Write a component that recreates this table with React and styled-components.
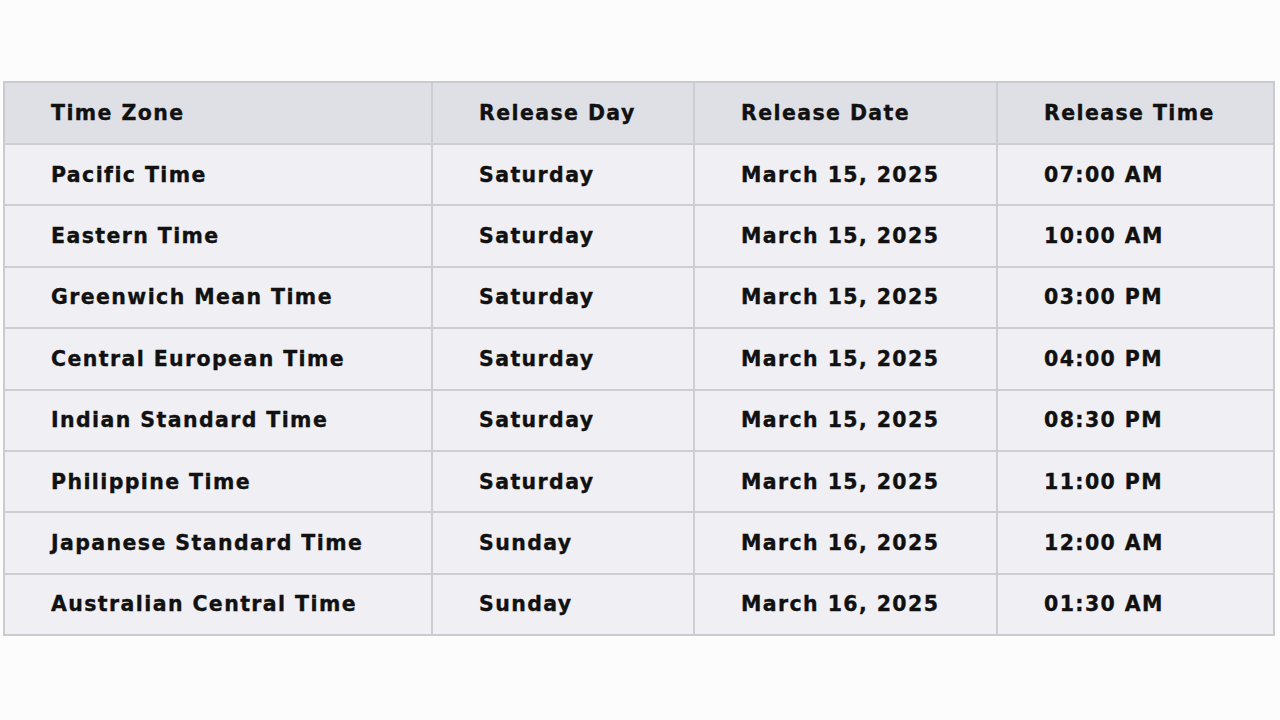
import React from 'react'
import styled, { createGlobalStyle } from 'styled-components'

const columns = ['Time Zone', 'Release Day', 'Release Date', 'Release Time']

const rows = [
  ['Pacific Time', 'Saturday', 'March 15, 2025', '07:00 AM'],
  ['Eastern Time', 'Saturday', 'March 15, 2025', '10:00 AM'],
  ['Greenwich Mean Time', 'Saturday', 'March 15, 2025', '03:00 PM'],
  ['Central European Time', 'Saturday', 'March 15, 2025', '04:00 PM'],
  ['Indian Standard Time', 'Saturday', 'March 15, 2025', '08:30 PM'],
  ['Philippine Time', 'Saturday', 'March 15, 2025', '11:00 PM'],
  ['Japanese Standard Time', 'Sunday', 'March 16, 2025', '12:00 AM'],
  ['Australian Central Time', 'Sunday', 'March 16, 2025', '01:30 AM'],
]

const GlobalStyle = createGlobalStyle`
  body {
    margin: 0;
    background: #fcfcfd;
    font-family: "DejaVu Sans", "Liberation Sans", sans-serif;
  }
`

const Page = styled.div`
  padding: 81px 0 0 3px;
`

const Grid = styled.div`
  display: grid;
  grid-template-columns: 426px 260px 301px 275px;
  grid-auto-rows: 59.4px;
  grid-template-rows: 60px;
  gap: 2px;
  width: max-content;
  border: 2px solid #cacacf;
  background: #cdcdd2;
`

const Cell = styled.div`
  display: flex;
  align-items: center;
  padding-left: 46px;
  background: ${(p) => (p.$head ? '#dfdfe6' : '#f0eff3')};
  color: #111;
  font-size: 20.5px;
  font-weight: 700;
  letter-spacing: 1.4px;
  -webkit-text-stroke: 0.35px #111;
  white-space: nowrap;
`

export default function App() {
  return (
    <>
      <GlobalStyle />
      <Page>
        <Grid>
          {columns.map((c) => (
            <Cell $head key={c}>{c}</Cell>
          ))}
          {rows.map((r) =>
            r.map((c, i) => <Cell key={r[0] + i}>{c}</Cell>)
          )}
        </Grid>
      </Page>
    </>
  )
}
